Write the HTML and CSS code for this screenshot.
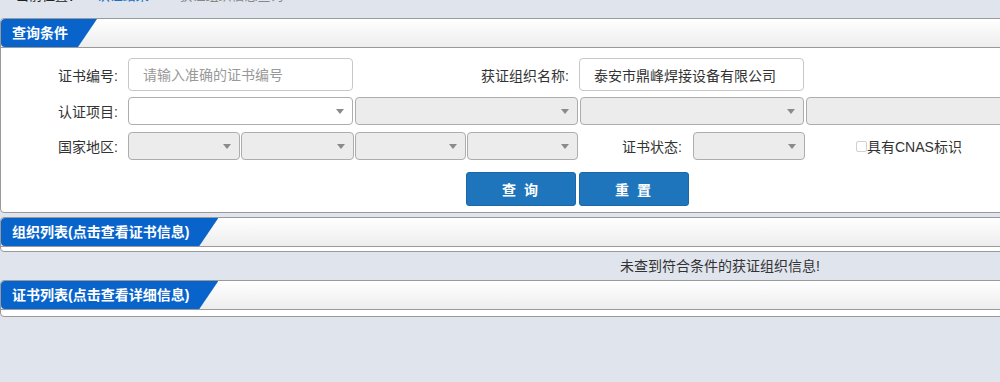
FILE: index.html
```html
<!DOCTYPE html>
<html lang="zh-CN">
<head>
  <meta charset="UTF-8">
  <meta name="viewport" content="width=device-width, initial-scale=1.0">
  <title>获证组织查询</title>
  <link rel="stylesheet" href="styles.css">
</head>
<body>
  <div class="page">
    <div class="crumb">
      <div class="crumb-inner">
        <span class="crumb-here">当前位置：</span>
        <a class="crumb-link" href="#">认证结果</a>
        <span class="crumb-sep">&gt;</span>
        <span class="crumb-cur">获证组织信息查询</span>
      </div>
    </div>

    <div class="panel">
      <div class="panel-head"><span class="tab">查询条件</span></div>
      <div class="search">
        <div class="row row-tall">
          <label class="lbl">证书编号:</label>
          <input class="field w-225" type="text" placeholder="请输入准确的证书编号">
          <label class="lbl lbl-wide">获证组织名称:</label>
          <input class="field w-225" type="text" value="泰安市鼎峰焊接设备有限公司">
        </div>
        <div class="row">
          <label class="lbl">认证项目:</label>
          <div class="select w-225 open"></div>
          <div class="select w-223"></div>
          <div class="select w-224"></div>
          <div class="select w-225 no-arrow"></div>
        </div>
        <div class="row row-tight">
          <label class="lbl">国家地区:</label>
          <div class="select w-112"></div>
          <div class="select w-113"></div>
          <div class="select w-111"></div>
          <div class="select w-111"></div>
          <label class="lbl lbl-state">证书状态:</label>
          <div class="select w-112"></div>
          <label class="cnas"><span class="box"></span>具有CNAS标识</label>
        </div>
        <div class="buttons">
          <button class="btn">查 询</button>
          <button class="btn">重 置</button>
        </div>
      </div>
    </div>

    <div class="panel panel-list">
      <div class="panel-head"><span class="tab">组织列表(点击查看证书信息)</span></div>
      <div class="panel-body"></div>
    </div>
    <div class="empty">未查到符合条件的获证组织信息!</div>

    <div class="panel">
      <div class="panel-head"><span class="tab">证书列表(点击查看详细信息)</span></div>
      <div class="panel-body tall"></div>
    </div>
  </div>
</body>
</html>
```

FILE: styles.css
```css
html, body {
  overflow: hidden;
}
body {
  margin: 0;
  padding: 0;
  background: #e0e4ed;
  font-family: "Liberation Sans", "Noto Sans CJK SC", sans-serif;
  font-size: 14px;
  color: #333;
}
.page {
  width: 1440px;
}
.crumb {
  display: flex;
  align-items: flex-start;
  height: 18px;
  padding-left: 16px;
}
.crumb-inner {
  margin-top: -12px;
  line-height: 16px;
  font-size: 13px;
}
.crumb-here {
  color: #222;
  margin-right: 12px;
}
.crumb-link {
  color: #1a6fc2;
  text-decoration: none;
}
.crumb-sep {
  color: #888;
  margin: 0 8px;
}
.crumb-cur {
  color: #888;
}
.panel {
  background: #fff;
  border: 1px solid #9a9a9a;
  border-radius: 4px;
}
.panel-head {
  height: 28px;
  border-bottom: 1px solid #9a9a9a;
  background: linear-gradient(#fff, #ededed);
  border-radius: 4px 4px 0 0;
}
.tab {
  display: inline-block;
  height: 28px;
  line-height: 28px;
  padding: 0 29px 0 11px;
  background: #0864cb;
  color: #fff;
  font-weight: bold;
  font-size: 14px;
  white-space: nowrap;
  border-radius: 4px 0 0 4px;
  clip-path: polygon(0 0, 100% 0, calc(100% - 19px) 100%, 0 100%);
}
.search {
  padding: 10px 0 6px;
}
.row {
  display: flex;
  align-items: center;
  gap: 2px;
  height: 28px;
  margin-bottom: 7px;
}
.row-tall {
  height: 33px;
  gap: 0;
  margin-bottom: 6px;
}
.row-tight {
  gap: 1px;
}
.lbl {
  width: 117px;
  margin-right: 8px;
  text-align: right;
  flex: none;
}
.row-tight .lbl {
  margin-right: 9px;
}
.row-tall .lbl {
  margin-right: 10px;
}
.lbl-wide {
  width: 216px;
}
.row-tall .lbl-wide {
  margin-right: 10px;
}
.row-tight .lbl-state {
  width: 103px;
  margin-right: 10px;
}
.field {
  box-sizing: border-box;
  height: 33px;
  border: 1px solid #c8c8c8;
  border-radius: 4px;
  padding: 0 14px;
  font: inherit;
  color: #333;
  flex: none;
}
.field::placeholder {
  color: #999;
}
.select {
  box-sizing: border-box;
  position: relative;
  height: 28px;
  border: 1px solid #adadad;
  border-radius: 4px;
  background: #ececec;
  flex: none;
}
.select.open {
  background: #fff;
}
.select::after {
  content: "";
  position: absolute;
  right: 8px;
  top: 11px;
  border-left: 4px solid transparent;
  border-right: 4px solid transparent;
  border-top: 5px solid #8a8a8a;
}
.select.no-arrow::after {
  display: none;
}
.w-111 { width: 111px; }
.w-112 { width: 112px; }
.w-113 { width: 113px; }
.w-223 { width: 223px; }
.w-224 { width: 224px; }
.w-225 { width: 225px; }
.cnas {
  display: flex;
  align-items: center;
  margin-left: 50px;
  color: #333;
}
.box {
  box-sizing: border-box;
  width: 11px;
  height: 11px;
  border: 1px solid #d0d0d0;
  border-radius: 2px;
  margin-top: 1px;
}
.buttons {
  display: flex;
  gap: 3px;
  padding-left: 465px;
  margin-top: 12px;
}
.btn {
  width: 110px;
  height: 34px;
  border: 1px solid #1b67a8;
  border-radius: 3px;
  background: #1f75bc;
  color: #fff;
  font: inherit;
  font-weight: bold;
  letter-spacing: 2px;
}
.panel-list {
  margin-top: 4px;
}
.panel-body {
  height: 4px;
}
.panel-body.tall {
  height: 6px;
}
.empty {
  height: 28px;
  line-height: 28px;
  text-align: center;
}
```
